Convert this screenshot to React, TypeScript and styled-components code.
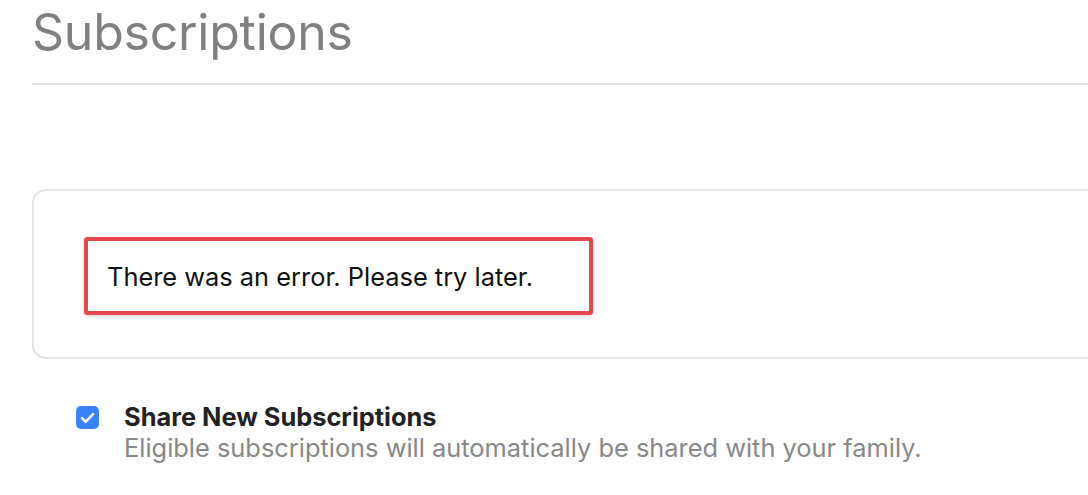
import React from "react";
import styled, { createGlobalStyle } from "styled-components";

const GlobalStyle = createGlobalStyle`
  html, body {
    margin: 0;
    padding: 0;
    background: #ffffff;
  }
  body {
    font-family: Inter, "Liberation Sans", Arial, sans-serif;
    overflow: hidden;
  }
`;

const Page = styled.div`
  width: 1088px;
  height: 495px;
  overflow: hidden;
  padding-left: 32px;
  box-sizing: border-box;
`;

const Column = styled.div`
  width: 1100px;
  display: flex;
  flex-direction: column;
`;

const Header = styled.header`
  border-bottom: 2px solid #e3e3e3;
  height: 83px;
  display: flex;
  align-items: flex-start;
`;

const Title = styled.h1`
  margin: 0;
  font-family: Inter, "Liberation Sans", Arial, sans-serif;
  font-weight: 400;
  font-size: 50px;
  line-height: 64px;
  color: #808080;
  letter-spacing: -0.25px;
`;

const Card = styled.section`
  margin-top: 104px;
  height: 170px;
  box-sizing: border-box;
  border: 2px solid #e3e3e3;
  border-radius: 14px;
  padding: 46px 0 0 50px;
`;

const ErrorBox = styled.div`
  width: 509px;
  height: 78px;
  box-sizing: border-box;
  border: 4px solid #e5484d;
  border-radius: 3px;
  box-shadow: 0 1px 4px rgba(0, 0, 0, 0.18);
  display: flex;
  align-items: center;
  padding-left: 19px;
  font-size: 25.4px;
  color: #111111;
`;

const OptionRow = styled.label`
  display: flex;
  align-items: flex-start;
  gap: 25px;
  margin-top: 42px;
  margin-left: 44px;
`;

const Check = styled.span`
  flex: none;
  width: 23px;
  height: 23px;
  margin-top: 5px;
  border-radius: 5px;
  background: #3a82f7;
  display: flex;
  align-items: center;
  justify-content: center;
`;

const OptionText = styled.div`
  display: flex;
  flex-direction: column;
`;

const OptionTitle = styled.span`
  font-size: 25.4px;
  font-weight: 650;
  color: #222222;
  line-height: 31px;
`;

const OptionSub = styled.span`
  font-size: 25.4px;
  color: #888888;
  line-height: 31px;
`;

export default function App() {
  return (
    <>
      <GlobalStyle />
      <Page>
        <Column>
          <Header>
            <Title>Subscriptions</Title>
          </Header>
          <Card>
            <ErrorBox>There was an error. Please try later.</ErrorBox>
          </Card>
          <OptionRow>
            <Check>
              <svg width="15" height="12" viewBox="0 0 15 12" fill="none">
                <path
                  d="M2 6.2 L5.6 9.8 L13 2.2"
                  stroke="#ffffff"
                  strokeWidth="2.6"
                  strokeLinecap="round"
                  strokeLinejoin="round"
                />
              </svg>
            </Check>
            <OptionText>
              <OptionTitle>Share New Subscriptions</OptionTitle>
              <OptionSub>
                Eligible subscriptions will automatically be shared with your family.
              </OptionSub>
            </OptionText>
          </OptionRow>
        </Column>
      </Page>
    </>
  );
}
